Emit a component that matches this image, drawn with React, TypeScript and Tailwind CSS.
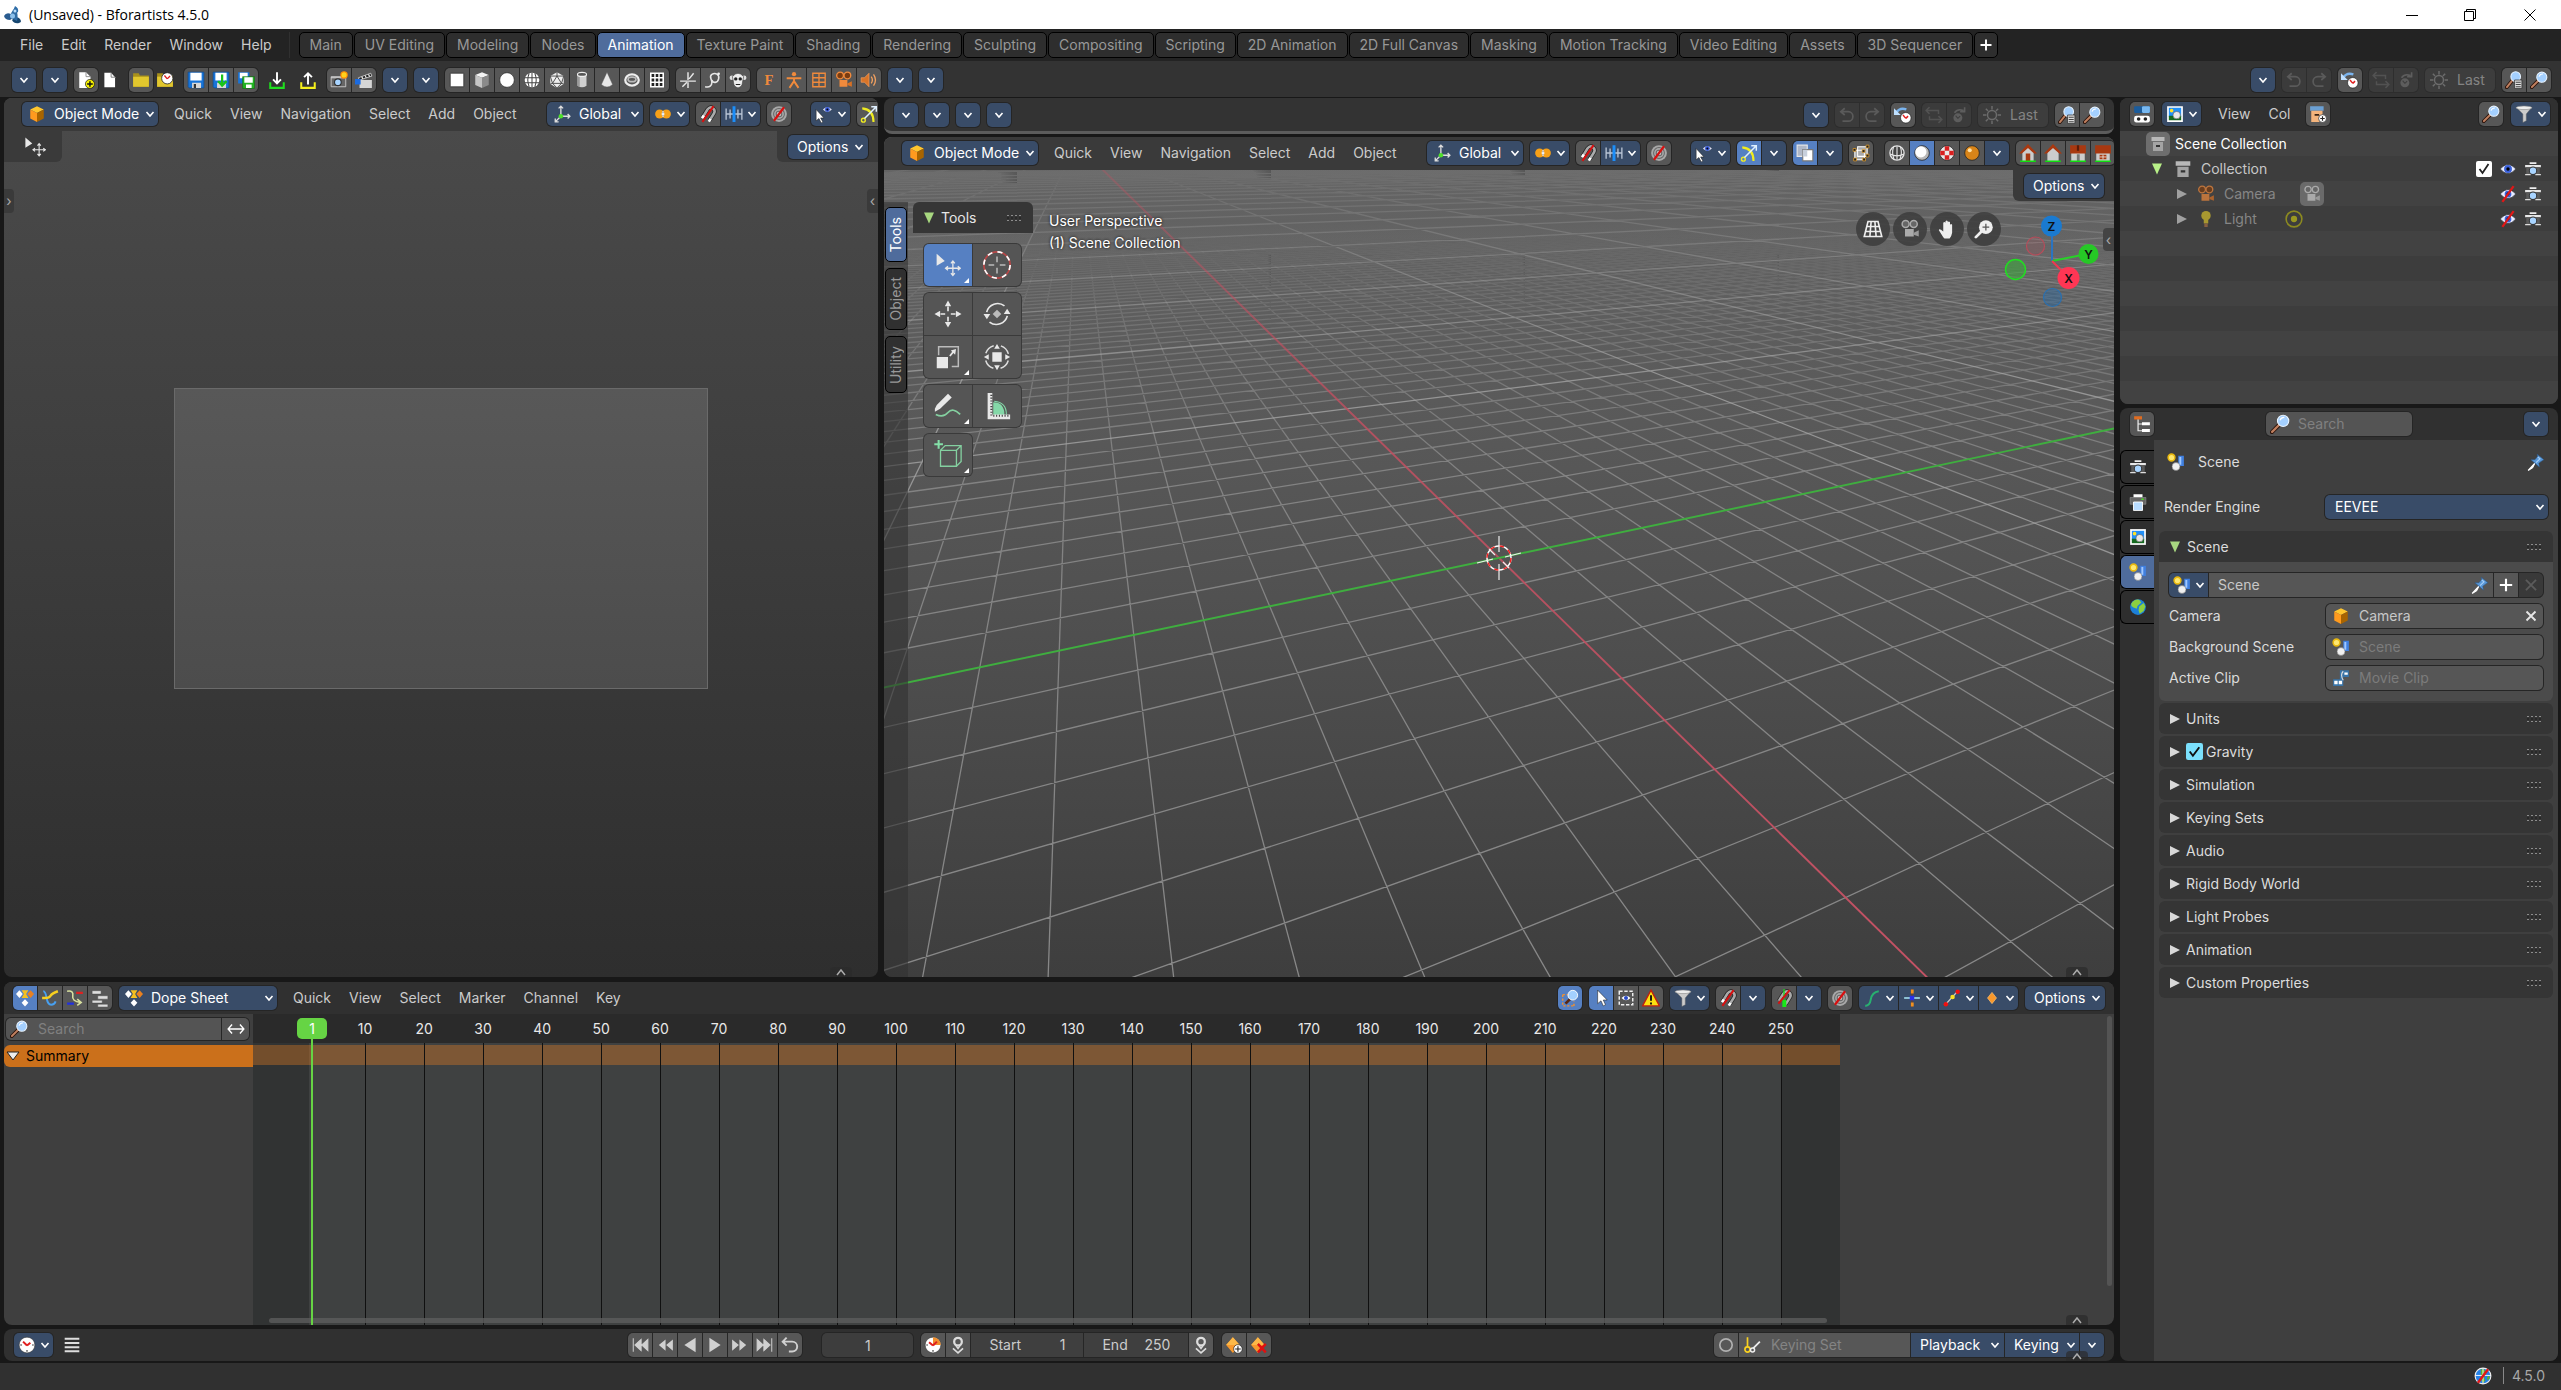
import React from 'react';

const ICONS: Record<string, React.ReactNode> = {
  fileNew: (
    <>
      <path d="M2 1h6l4 4v10H2z" fill="#fff" />
      <path d="M8 1v4h4" fill="none" stroke="#888" strokeWidth=".8" />
      <circle cx="11.5" cy="11.5" r="4" fill="#f6f000" stroke="#111" strokeWidth=".6" />
      <path d="M11.5 9v5M9 11.5h5" stroke="#111" strokeWidth="1.3" />
    </>
  ),
  file: (
    <>
      <path d="M3 1.5h6l3.5 4v9H3z" fill="#fff" />
      <path d="M9 1.5v4h3.5" fill="none" stroke="#777" strokeWidth=".8" />
    </>
  ),
  folder: (
    <>
      <path d="M1 2h5l1 2h8v10H1z" fill="#a8901c" />
      <path d="M1 5h14v9H1z" fill="#e2c72e" />
    </>
  ),
  folderClock: (
    <>
      <path d="M1 2h5l1 2h8v10H1z" fill="#a8901c" />
      <path d="M1 5h14v9H1z" fill="#e2c72e" />
      <circle cx="10" cy="6.5" r="5" fill="#fff" stroke="#222" strokeWidth=".7" />
      <path d="M10 7 7.5 4M10 7l2.5-2.5" stroke="#e02020" strokeWidth="1.2" />
    </>
  ),
  save: (
    <>
      <path d="M1 1h14v14H2l-1-1z" fill="#1874d8" stroke="#0b4a94" strokeWidth=".6" />
      <path d="M3 1.5h10v7H3z" fill="#fff" />
      <path d="M4.5 10.5h8V15h-8z" fill="#d8d8d8" />
      <path d="M6 11.5h2V15H6z" fill="#333" />
    </>
  ),
  saveDown: (
    <>
      <path d="M1 1h14v14H2l-1-1z" fill="#1874d8" stroke="#0b4a94" strokeWidth=".6" />
      <path d="M3 1.5h10v7H3z" fill="#fff" />
      <path d="M4.5 10.5h8V15h-8z" fill="#d8d8d8" />
      <path d="M9 3v10M5.5 9 9 13l4-4" fill="none" stroke="#18c418" strokeWidth="2" />
    </>
  ),
  saveCopy: (
    <>
      <path d="M1 1h10v10H1z" fill="#1874d8" />
      <path d="M2.5 1.5h7v5h-7z" fill="#fff" />
      <path d="M5 5h10.500v10.500H5z" fill="#22b422" stroke="#0d6a0d" strokeWidth=".5" />
      <path d="M6.500 5.500h7.500v5H6.500zM8 12h5v3H8z" fill="#fff" />
    </>
  ),
  importIn: (
    <>
      <path d="M2 10v5h12v-5" fill="none" stroke="#1fe01f" strokeWidth="1.800" />
      <path d="M8 1v10M4.500 7.500 8 11l3.500-3.500" fill="none" stroke="#fff" strokeWidth="1.700" />
    </>
  ),
  exportOut: (
    <>
      <path d="M2 10v5h12v-5" fill="none" stroke="#f4f01c" strokeWidth="1.800" />
      <path d="M8 12V2M4.500 5.500 8 2l3.500 3.500" fill="none" stroke="#fff" strokeWidth="1.700" />
    </>
  ),
  photo: (
    <>
      <path d="M1 5h13v9H1z" fill="#666" stroke="#ccc" strokeWidth=".8" />
      <path d="M1 6h12" stroke="#ddd" />
      <circle cx="7" cy="10" r="3" fill="#a8d4ff" stroke="#333" />
      <circle cx="12.500" cy="3.500" r="2.800" fill="#ffd21c" stroke="#f80" />
    </>
  ),
  clapper: (
    <>
      <path d="M4 8h11v7H4z" fill="#d6d6d6" />
      <path d="m3 6 11-4 1 2.500L4 8z" fill="#222" stroke="#ddd" strokeWidth=".7" />
      <path d="m6 5 1 2M9 4l1 2M12 3l1 2" stroke="#eee" />
      <path d="M0 7h5v5H0z" fill="#1b6be0" />
    </>
  ),
  plane: <path d="M2 2h12v12H2z" fill="#fff" stroke="#222" strokeWidth=".6" />,
  cube: (
    <>
      <path d="m8 1 6 2.500L8 6 2 3.500z" fill="#f4f4f4" />
      <path d="M2 3.500 8 6v9l-6-2.500z" fill="#c4c4c4" />
      <path d="M14 3.500 8 6v9l6-2.500z" fill="#8a8a8a" />
    </>
  ),
  circle: <circle cx="8" cy="8" r="6.500" fill="#fff" stroke="#222" strokeWidth=".6" />,
  uvsphere: (
    <>
      <circle cx="8" cy="8" r="6.500" fill="#fff" />
      <path d="M1.500 6h13M1.500 10.500h13M8 1.500v13M5.500 2Q3 8 5.500 14M10.500 2q2.500 6 0 12" fill="none" stroke="#444" strokeWidth=".9" />
    </>
  ),
  ico: (
    <>
      <path d="m8 1 6 3.500v7L8 15l-6-3.500v-7z" fill="#eee" />
      <path d="m8 4.500 4 6.500H4zM8 1v3.500M2 4.500 8 4.500l6 0M2 11.500l2-.5M14 11.500l-2-.5M8 15l-4-4M8 15l4-4M2 4.500 4 11M14 4.500 12 11" fill="none" stroke="#444" strokeWidth=".8" />
    </>
  ),
  cylinder: (
    <>
      <path d="M4 3v10q4 3 8 0V3z" fill="#d0d0d0" />
      <path d="M4 3v10l2 1.300V4z" fill="#9a9a9a" />
      <ellipse cx="8" cy="3" rx="4" ry="1.800" fill="#555" stroke="#eee" />
    </>
  ),
  cone: <path d="m8 1 5 11q-5 4.500-10 0z" fill="#e6e6e6" stroke="#555" strokeWidth=".4" />,
  torus: (
    <>
      <ellipse cx="8" cy="8" rx="6" ry="5" fill="none" stroke="#eee" strokeWidth="2" />
      <ellipse cx="8" cy="7.500" rx="3.500" ry="2" fill="none" stroke="#bbb" strokeWidth="1.500" />
    </>
  ),
  grid: (
    <>
      <path d="M2.500 2h11v12h-11z" fill="#222" stroke="#fff" strokeWidth="1.400" />
      <path d="M6.200 2v12M9.800 2v12M2.500 6h11M2.500 10h11" stroke="#fff" strokeWidth="1.300" />
    </>
  ),
  empty: <path d="M1 9h14M8 1v7M8 10v5M3 14l4-4M9 7l4-5" stroke="#e6e6e6" strokeWidth="1.300" />,
  curve: (
    <>
      <path d="M1 14c4 1 6-1 6-4S4 5 7 3s7 0 6 4-5 4-6 1" fill="none" stroke="#e6e6e6" strokeWidth="1.400" />
      <circle cx="13" cy="2.500" r="1.200" fill="#eee" />
    </>
  ),
  monkey: (
    <>
      <circle cx="2.500" cy="6" r="2" fill="#ddd" />
      <circle cx="13.500" cy="6" r="2" fill="#ddd" />
      <path d="M3 5q5-6 10 0l-1 5q0 4-4 5-4-1-4-5z" fill="#eee" stroke="#444" strokeWidth=".6" />
      <circle cx="6" cy="7" r="1.500" fill="#222" />
      <circle cx="10" cy="7" r="1.500" fill="#222" />
      <path d="M6 12h4" stroke="#222" />
    </>
  ),
  fontObj: (
    <text x="8" y="12.500" textAnchor="middle" fontFamily="Liberation Serif, serif" fontWeight="700" fontSize="13" fill="#f08a3c">
      F
    </text>
  ),
  armature: (
    <>
      <circle cx="8" cy="2.800" r="1.900" fill="#f08a3c" />
      <path d="M1.500 6.500h13M8 6v4M8 9 4 15M8 9l4 6" stroke="#f08a3c" strokeWidth="1.700" fill="none" />
    </>
  ),
  lattice: <path d="M2.500 2h11v12h-11zM8 2v12M2.500 6h11M2.500 10h11" fill="none" stroke="#f08a3c" strokeWidth="1.200" />,
  movieCam: (
    <>
      <circle cx="4.500" cy="4" r="3" fill="#7a3c10" stroke="#f08a3c" strokeWidth="1.200" />
      <circle cx="11" cy="4" r="3" fill="#7a3c10" stroke="#f08a3c" strokeWidth="1.200" />
      <path d="M4 8h7v6H4z" fill="#f08a3c" />
      <path d="m11 11 4-2v5l-4-1.500z" fill="#d87024" />
    </>
  ),
  movieCamGray: (
    <>
      <circle cx="4.500" cy="4" r="2.800" fill="#666" stroke="#aaa" strokeWidth="1.200" />
      <circle cx="11" cy="4" r="2.800" fill="#666" stroke="#aaa" strokeWidth="1.200" />
      <path d="M4 8h7v6H4z" fill="#aaa" />
      <path d="m11 11 4-2v5l-4-1.500z" fill="#999" />
    </>
  ),
  speaker: (
    <>
      <path d="M1 6h3l4-4v12l-4-4H1z" fill="#d87428" stroke="#f4a060" strokeWidth=".6" />
      <path d="M10 5q2 3 0 6M12 3q3.500 5 0 10" fill="none" stroke="#f0a060" strokeWidth="1.200" />
    </>
  ),
  undo: <path d="M6 2 2.500 5 6 8M3 5h6a4 4 0 0 1 0 8.500H4" fill="none" stroke="#666" strokeWidth="1.500" />,
  redo: <path d="M10 2 13.500 5 10 8M13 5H7a4 4 0 0 0 0 8.500h5" fill="none" stroke="#666" strokeWidth="1.500" />,
  history: (
    <>
      <path d="M2 6q3-5 9-3" fill="none" stroke="#7ab4ee" strokeWidth="2" />
      <path d="M0 2v6h6z" fill="#bfe0ff" />
      <circle cx="10.500" cy="10.500" r="4.700" fill="#fff" stroke="#222" strokeWidth=".6" />
      <path d="M10.500 11 8 8M10.500 11l2-2" stroke="#e02020" strokeWidth="1.300" />
    </>
  ),
  repeat: <path d="M4 1 1 4l3 3M1.500 4H12v3M12 15l3-3-3-3M14.500 12H4V9" fill="none" stroke="#5c5c5c" strokeWidth="1.300" />,
  repeatHist: (
    <>
      <path d="M4 6q3-4 8-2M13 1v4H9" fill="none" stroke="#6a6a6a" strokeWidth="1.400" />
      <circle cx="7" cy="10.500" r="4" fill="#6a6a6a" />
      <path d="M7 11 5 8.500M7 11l2-2" stroke="#444" />
    </>
  ),
  gear: (
    <>
      <circle cx="8" cy="8" r="4" fill="none" stroke="#6c6c6c" strokeWidth="1.300" />
      <path d="M8 0v3M8 13v3M0 8h3M13 8h3M2.500 2.500l2 2M11.500 11.500l2 2M13.500 2.500l-2 2M4.500 11.500l-2 2" stroke="#6c6c6c" strokeWidth="1.300" />
    </>
  ),
  search: (
    <>
      <path d="m7 9-5.500 5.500" stroke="#2a120a" strokeWidth="3.200" strokeLinecap="round" />
      <path d="m7 9-5.300 5.300" stroke="#c08060" strokeWidth="1.800" strokeLinecap="round" />
      <circle cx="10.500" cy="5.500" r="4.500" fill="#a4d0ff" stroke="#e8f4ff" strokeWidth=".9" />
      <path d="M8 5q1-2.500 3.500-2.300" fill="none" stroke="#fff" />
    </>
  ),
  searchList: (
    <>
      <path d="m6 9-4.500 5.500" stroke="#2a120a" strokeWidth="3.200" strokeLinecap="round" />
      <path d="m6 9-4.300 5.300" stroke="#c08060" strokeWidth="1.800" strokeLinecap="round" />
      <circle cx="9.500" cy="5" r="4.300" fill="#a4d0ff" stroke="#e8f4ff" strokeWidth=".9" />
      <path d="M8.500 8H15v7.500H8.500z" fill="#ddd" stroke="#222" strokeWidth=".6" />
      <path d="M9.500 10h4.500M9.500 12h4.500M9.500 14h4.500" stroke="#333" strokeWidth=".8" />
    </>
  ),
  cubeOrange: (
    <>
      <path d="m8 1 6 3-6 3-6-3z" fill="#ffc62e" />
      <path d="M2 4l6 3v8l-6-3z" fill="#ff9a1e" />
      <path d="m14 4-6 3v8l6-3z" fill="#a86400" />
    </>
  ),
  orient: (
    <>
      <path d="M7 10V1M5 3l2-2 2 2M7 10h8M13 8l2 2-2 2M7 10l-5 5M2 12v3h3" fill="none" stroke="#ddd" strokeWidth="1.200" />
      <circle cx="7" cy="10" r="2" fill="#4ee02a" />
    </>
  ),
  pivot: (
    <>
      <circle cx="5" cy="8" r="4" fill="#f6a018" />
      <circle cx="11" cy="8" r="4" fill="#f6a018" />
      <path d="M8 5.300q2 2.700 0 5.400-2-2.700 0-5.400z" fill="#20304a" stroke="#fff" strokeWidth=".6" />
      <circle cx="8" cy="8" r="1" fill="#fff" />
    </>
  ),
  magnetOff: (
    <>
      <path d="M3.500 10.500 7.500 4q2.500-3 5-1t.5 5L9.500 13.500" fill="none" stroke="#222" strokeWidth="3.600" />
      <path d="M3.500 10.500 7.500 4q2.500-3 5-1t.5 5L9.500 13.500" fill="none" stroke="#aaa" strokeWidth="2.300" />
      <path d="m2.700 11.800 1.600-2.500M8.700 14.800l1.600-2.500" stroke="#fff" strokeWidth="2.300" />
      <path d="M3 15 13 1" stroke="#d81010" strokeWidth="1.800" />
    </>
  ),
  snapInc: (
    <>
      <path d="M1 3v10M4.500 4v8M11.500 4v8M15 3v10M1 8h14" stroke="#b8c4d4" strokeWidth="1.200" />
      <path d="M8 1v14" stroke="#1c8ef8" strokeWidth="2.600" />
    </>
  ),
  propOff: (
    <>
      <circle cx="8" cy="8" r="7" fill="#a8a8a8" />
      <circle cx="8" cy="8" r="4.800" fill="none" stroke="#666" strokeWidth=".9" />
      <circle cx="8" cy="8" r="2.500" fill="#c8c8c8" stroke="#666" strokeWidth=".9" />
      <path d="M3.500 14 12.500 2" stroke="#d81010" strokeWidth="1.900" />
    </>
  ),
  cursorEye: (
    <>
      <path d="m1 4 0 10 2.500-2 2 4 1.500-1-2-3.500H8z" fill="#fff" stroke="#222" strokeWidth=".5" />
      <path d="M7 4q4-4 8 0-4 4-8 0z" fill="#dde" />
      <circle cx="11" cy="4" r="2.200" fill="#3a5cd8" />
      <circle cx="11" cy="4" r=".9" fill="#001" />
    </>
  ),
  gizmo: (
    <>
      <path d="M2 3q10 1 10 12" fill="none" stroke="#f0ec20" strokeWidth="1.900" />
      <circle cx="3" cy="13.500" r="1.700" fill="none" stroke="#f0ec20" strokeWidth="1.200" />
      <path d="M4 12 14 2M10 1.500h4.500V6" fill="none" stroke="#dff0ff" strokeWidth="1.300" />
    </>
  ),
  xray: (
    <>
      <path d="M1 1h9v10H1z" fill="#b0b8c8" stroke="#e8e8e8" />
      <path d="M6 5h9v10H6z" fill="#fff" stroke="#777" />
      <path d="M6 5h4v6H6z" fill="#c8d0dc" />
    </>
  ),
  retopo: (
    <>
      <path d="M5 2.500h8.500V11H5zM2.500 5.500H11V14H2.500z" fill="#aaa" stroke="#fff" strokeWidth=".9" />
      <path d="M1 4h2.500v2.500H1zM1.500 12.500H4V15H1.500zM9.500 12.500H12V15H9.500zM12.500 1H15v2.500h-2.500zM12.500 9H15v2.500h-2.500zM9 5h2.500v2.500H9z" fill="#222" stroke="#f6a828" strokeWidth=".6" />
    </>
  ),
  wire: (
    <>
      <circle cx="8" cy="8" r="6.300" fill="#444" stroke="#e4e4e4" strokeWidth="1.200" />
      <path d="M8 2v12M2 9q6 3 12 0M5 2.500Q3 8 5.500 14M11 2.500q2 5.500-.5 11.500" fill="none" stroke="#e4e4e4" />
    </>
  ),
  solid: (
    <>
      <circle cx="8" cy="8" r="6.500" fill="#b8b8b8" stroke="#222" strokeWidth=".7" />
      <circle cx="7" cy="7" r="5" fill="#fff" />
    </>
  ),
  material: (
    <>
      <circle cx="8" cy="8" r="6.500" fill="#e8e8e8" stroke="#222" strokeWidth=".7" />
      <path d="M6 2h4v4H6zM2 6h4v4H2zM10 6h4v4h-4zM6 10h4v4H6z" fill="#d82020" />
    </>
  ),
  rendered: (
    <>
      <circle cx="8" cy="8" r="6.500" fill="#d88418" stroke="#222" strokeWidth=".7" />
      <circle cx="6" cy="5.500" r="1.800" fill="#ffe2a8" />
    </>
  ),
  home1: (
    <>
      <path d="M3 7 8 3l5 4v8H3z" fill="#ccc" />
      <path d="M8 0 0 8.500h2.500L8 3.500l5.500 5H16z" fill="#a83810" />
      <path d="M6 8.500h4V15H6z" fill="#a83810" />
      <path d="M1 15.300h14" stroke="#10e010" strokeWidth="1.300" />
    </>
  ),
  home2: (
    <>
      <path d="M3 7 8 3l5 4v8H3z" fill="#ccc" />
      <path d="M8 0 0 8.500h2.500L8 3.500l5.500 5H16z" fill="#a83810" />
      <path d="M1 15.300h14" stroke="#10e010" strokeWidth="1.300" />
    </>
  ),
  home3: (
    <>
      <path d="M2 8h12v7H2z" fill="#ccc" />
      <path d="M1 1h14v7.500H1z" fill="#a83810" />
      <path d="M7 1h2v5H7z" fill="#5a1c08" />
      <path d="M7 9h2.500v6H7z" fill="#777" />
      <path d="M1 15.300h14" stroke="#10e010" strokeWidth="1.300" />
    </>
  ),
  home4: (
    <>
      <path d="M2 8h12v7H2z" fill="#ccc" />
      <path d="M1 1h14v7.500H1z" fill="#a83810" />
      <path d="M5 9.500h6v4H5z" fill="#a83810" />
      <path d="M8 9.500v4M5 11.500h6" stroke="#eee" strokeWidth=".7" />
      <path d="M1 15.300h14" stroke="#10e010" strokeWidth="1.300" />
    </>
  ),
  toggles: (
    <>
      <rect x="1" y="1" width="14" height="6" rx="1" fill="#1b5c9c" />
      <rect x="8" y="1" width="7" height="6" rx="1" fill="#78b8f0" />
      <rect x="1" y="9.500" width="14" height="6" rx="2" fill="#fff" />
      <circle cx="5" cy="12.500" r="1.600" fill="#222" />
      <circle cx="11" cy="12.500" r="1.600" fill="#222" />
    </>
  ),
  image: (
    <>
      <path d="M1 1h14v14H1z" fill="#fff" />
      <path d="M2.500 2.500h11v8h-11z" fill="#2290f8" />
      <path d="M2.500 9.500h11v4h-11z" fill="#166a20" />
      <circle cx="5" cy="5" r="1.600" fill="#ffe028" />
      <circle cx="9.500" cy="9" r="3.300" fill="#e8e8e8" stroke="#555" strokeWidth=".5" />
    </>
  ),
  boxAdd: (
    <>
      <path d="M1 1h12v4H1z" fill="#6ba0d4" />
      <path d="M2 5h10v10H2z" fill="#f4b47c" />
      <path d="M5 8h4v1.500H5z" fill="#3a2414" />
      <circle cx="12" cy="12" r="3.500" fill="#fff" stroke="#222" strokeWidth=".6" />
      <path d="M12 10v4M10 12h4" stroke="#222" />
    </>
  ),
  box: (
    <>
      <path d="M1.500 1h13v4h-13z" fill="#b8b8b8" />
      <path d="M3 6h10v9H3z" fill="#a4a4a4" />
      <path d="M6 9h4v2H6z" fill="#333" />
    </>
  ),
  funnel: (
    <>
      <path d="M1 2q7 3 14 0l-5 6v6l-3 1.500V8z" fill="#ccc" stroke="#666" strokeWidth=".4" />
      <ellipse cx="8" cy="2.500" rx="7" ry="1.600" fill="#eee" stroke="#888" strokeWidth=".5" />
    </>
  ),
  eye: (
    <>
      <path d="M1 8q7-8 14 0-7 8-14 0z" fill="#e8ecff" stroke="#222" strokeWidth=".6" />
      <circle cx="8" cy="8" r="3.500" fill="#3a60d8" />
      <circle cx="8" cy="8" r="1.500" fill="#000" />
    </>
  ),
  eyeOff: (
    <>
      <path d="M1 8q7-8 14 0-7 8-14 0z" fill="#e8ecff" stroke="#222" strokeWidth=".6" />
      <circle cx="8" cy="8" r="3" fill="#3a60d8" />
      <circle cx="8" cy="8" r="1.300" fill="#000" />
      <path d="M3 15 13 1" stroke="#e01818" strokeWidth="2" />
    </>
  ),
  render: (
    <>
      <path d="M5 2h6v1.500H5z" fill="#eee" />
      <path d="M1 4.500h14v2H1z" fill="#e8e8e8" />
      <path d="M2 6.500h12v6H2z" fill="#5a5a5a" />
      <path d="M1 13h5M10 13h5" stroke="#ddd" strokeWidth="1.200" />
      <circle cx="8" cy="9.500" r="3.300" fill="#a8d4ff" stroke="#333" strokeWidth=".9" />
    </>
  ),
  bulb: (
    <>
      <circle cx="8" cy="5" r="4.200" fill="#a89830" />
      <path d="M6 8h4v4H6z" fill="#a89830" />
      <path d="M6.500 12h3v3h-3z" fill="#886040" />
    </>
  ),
  lightData: (
    <>
      <circle cx="8" cy="8" r="7" fill="none" stroke="#8c8a20" strokeWidth="1.400" />
      <circle cx="8" cy="8" r="2.800" fill="#9a9820" />
    </>
  ),
  tree: (
    <>
      <path d="M1 1h7v3H1z" fill="#e06c20" />
      <path d="M4.500 4v10H8M4.500 8H8" fill="none" stroke="#eee" strokeWidth="1.100" />
      <path d="M8 6.500h7V9H8zM8 12.500h7V15H8z" fill="#fff" />
    </>
  ),
  scene: (
    <>
      <circle cx="4" cy="4" r="3" fill="#ffe870" stroke="#e8b810" strokeWidth="1.400" />
      <path d="M10 2.500h5v9h-5z" fill="#4080e0" />
      <path d="M11 3.500h1.700v7H11z" fill="#a0c8ff" />
      <circle cx="8" cy="12" r="3.500" fill="#f0f0f0" stroke="#777" strokeWidth=".5" />
    </>
  ),
  pin: (
    <>
      <path d="M7 9 1 15.500 5 13z" fill="#fff" stroke="#fff" />
      <path d="m9 1 6 5-1.500.8L10.500 9l.5 3.500L3.500 6 7 6l2.500-3z" fill="#5a98d8" stroke="#2a5888" strokeWidth=".5" />
      <path d="m9.500 3.500 2 1.700L8 8.500" fill="none" stroke="#a8d0f8" />
    </>
  ),
  printer: (
    <>
      <path d="M4 1h8v3H4z" fill="#fff" />
      <path d="M1 4h14v6H1z" fill="#666" stroke="#999" strokeWidth=".5" />
      <path d="M11 5.500h2" stroke="#48e020" strokeWidth="1.400" />
      <path d="M4 8h8v7.500H4z" fill="#b8dcff" stroke="#fff" strokeWidth=".8" />
    </>
  ),
  world: (
    <>
      <circle cx="8" cy="8" r="7" fill="#1c80d8" />
      <path d="M2 5q3-4.500 7-3.500l2 2.500-3.500 3-.5 2.500-3-1L2.200 7zM9 7.500l4-3 1.500 3-1.500 4-3.500 2.500-1-3z" fill="#8cd040" />
    </>
  ),
  clip: (
    <>
      <path d="M7 1h8v6h-5v4H7z" fill="#3874a8" />
      <path d="M1 9h9v6H1z" fill="#3874a8" />
      <path d="M2 10.500h3v3H2zM6 10.500h3v3H6zM11 3h3v2h-3z" fill="#fff" />
      <path d="M10 10q-3-5 0-8" stroke="#ddd" fill="none" />
    </>
  ),
  dope: (
    <>
      <path d="m3 1 3 3.500L3 8 0 4.500z" fill="#fff" />
      <path d="M5 1h6L9 4.500 11 8H5l2-3.500z" fill="#f6c020" />
      <path d="m13 1 3 3.500L13 8l-3-3.500z" fill="#e88020" />
      <path d="m8 9 3 3.300L8 15.600 5 12.300z" fill="#fff" />
    </>
  ),
  graph: (
    <>
      <path d="M2 2q2 0 3 6t4 6 4-3" fill="none" stroke="#48a0f0" strokeWidth="1.700" />
      <path d="M1 8h2.500q4 0 5-2T15 2" fill="none" stroke="#f8d020" strokeWidth="2.200" />
    </>
  ),
  driver: (
    <>
      <path d="M1 2q6-1 5 4t7 6M10 9l3.500 3L10 14.500" fill="none" stroke="#d8e0a0" strokeWidth="1.400" />
      <path d="M9 3.500h6" stroke="#e02020" strokeWidth="2" />
      <path d="M1 13h6" stroke="#2030e0" strokeWidth="2" />
    </>
  ),
  nla: (
    <>
      <path d="M1 1.500h8v3H1zM6 6h9v3H6zM1 10h9v2.500H1zM6 13.500h9V16H6z" fill="#ddd" stroke="#444" strokeWidth=".4" />
    </>
  ),
  swap: <path d="M1 8h14M4.500 4 1 8l3.500 4M11.500 4 15 8l-3.500 4" fill="none" stroke="#fff" strokeWidth="1.200" />,
  cursorBox: (
    <>
      <path d="M1.500 5v10h10" fill="none" stroke="#f09030" strokeDasharray="2 1.500" strokeWidth="1.300" />
      <path d="M1.500 5h5M11.500 15v-4" stroke="#f09030" strokeDasharray="2 1.500" strokeWidth="1.300" />
      <path d="M8 9 4 13" stroke="#5a2810" strokeWidth="2.500" />
      <circle cx="10.500" cy="5.500" r="4.300" fill="#a4d0ff" stroke="#fff" strokeWidth=".8" />
    </>
  ),
  arrow: <path d="M5 1v12l3-2.500L10 15l2-1-2-4.200h3.500z" fill="#fff" stroke="#222" strokeWidth=".5" />,
  hidden: (
    <>
      <path d="M2 2h12v12H2z" fill="none" stroke="#eee" strokeWidth="1.300" strokeDasharray="3 1.500" />
      <path d="M4 8q4-4 8 0-4 4-8 0z" fill="#fff" />
      <circle cx="8" cy="8" r="1.800" fill="#2848c8" />
    </>
  ),
  warning: (
    <>
      <path d="M8 1 15.500 15H.5z" fill="#fce010" stroke="#c02010" strokeWidth="1.200" />
      <path d="M8 5.500v5M8 12v1.800" stroke="#111" strokeWidth="1.700" />
    </>
  ),
  magnetGreen: (
    <>
      <path d="M3.500 10.500 7.500 4q2.500-3 5-1t.5 5L9.500 13.500" fill="none" stroke="#222" strokeWidth="3.600" />
      <path d="M3.500 10.500 7.500 4q2.500-3 5-1t.5 5L9.500 13.500" fill="none" stroke="#aaa" strokeWidth="2.300" />
      <path d="M8 0v9" stroke="#18d818" strokeWidth="1.200" />
      <path d="M6.500 9.500h3.500V16H6.500z" fill="#18e818" />
      <path d="M3 13 13 1" stroke="#d81010" strokeWidth="1.800" />
    </>
  ),
  interp: <path d="M2 15q4 0 5-6t7-7" fill="none" stroke="#28b070" strokeWidth="1.800" />,
  keyAxes: (
    <>
      <path d="M8 0v16" stroke="#7a3c20" />
      <path d="M1 8h14" stroke="#a8e8f8" strokeWidth="1.500" />
      <path d="M6 6h4v4H6z" fill="#2830e8" />
      <path d="M7 .5h2.500V4H7zM7 12h2.500v3.500H7z" fill="#f09020" />
    </>
  ),
  handles: (
    <>
      <path d="M2 14 13 2" stroke="#ccc" />
      <circle cx="2.500" cy="13.500" r="2" fill="#f01010" />
      <circle cx="13" cy="2.500" r="2" fill="#f01010" />
      <circle cx="8.500" cy="7" r="2" fill="#f8e020" />
    </>
  ),
  keyframe: <path d="m8 3 4 5-4 5-4-5z" fill="#f8982c" stroke="#ffc070" strokeWidth=".6" />,
  clock: (
    <>
      <circle cx="8" cy="8" r="7" fill="#fff" stroke="#333" strokeWidth=".5" />
      <path d="M8 8.500 4.500 5M8 8.500 11 6" stroke="#e02020" strokeWidth="1.800" />
      <path d="M8 12.500v1.500M2 8h1.500M12.500 8H14" stroke="#333" />
    </>
  ),
  clockRange: (
    <>
      <circle cx="8" cy="8" r="7" fill="#fff" stroke="#333" strokeWidth=".5" />
      <path d="M8 8V1a7 7 0 0 1 7 7z" fill="#f09030" />
      <path d="M8 8.500 4.500 5.500M8 8.500 11.500 5" stroke="#e02020" strokeWidth="1.800" />
      <path d="M8 12.500v1.500M2 8h1.500" stroke="#333" />
    </>
  ),
  menu: <path d="M1.500 2.500h13M1.500 6.200h13M1.500 9.900h13M1.500 13.600h13" stroke="#ddd" strokeWidth="1.800" />,
  first: <path d="M2 2v12M9 3v10L3.500 8zM15 3v10L9.500 8z" fill="#d0d0d0" stroke="#d0d0d0" strokeWidth=".9" />,
  prev: <path d="M8.500 3v10L2.500 8zM15 3v10L9 8z" fill="#d0d0d0" />,
  playBack: <path d="M13 1.500v13L3 8z" fill="#d0d0d0" />,
  play: <path d="M3 1.500v13L13 8z" fill="#d0d0d0" />,
  next: <path d="M7.500 3v10l6-5zM1 3v10l6-5z" fill="#d0d0d0" />,
  last: <path d="M14 2v12M7 3v10l5.500-5zM1 3v10l5.500-5z" fill="#d0d0d0" stroke="#d0d0d0" strokeWidth=".9" />,
  loop: <path d="M5 1.500 1.500 5 5 8.500M2 5h8a4.300 4.300 0 0 1 0 8.800H7" fill="none" stroke="#d0d0d0" strokeWidth="1.700" />,
  marker: (
    <>
      <circle cx="8" cy="5" r="3.400" fill="none" stroke="#ddd" strokeWidth="2" />
      <path d="M5.500 7.500 8 11l2.500-3.500M3.500 11 8 15l4.500-4" fill="none" stroke="#ddd" strokeWidth="1.400" />
    </>
  ),
  keyAdd: (
    <>
      <path d="m7 1 6 7-6 7-6-7z" fill="#f8982c" />
      <path d="m7 1 6 7H1z" fill="#fcb848" />
      <circle cx="11.500" cy="11.500" r="3.800" fill="#fff" stroke="#222" strokeWidth=".6" />
      <path d="M11.500 9v5M9 11.500h5" stroke="#222" />
    </>
  ),
  keyDel: (
    <>
      <path d="m7 1 6 7-6 7-6-7z" fill="#f8982c" />
      <path d="m7 1 6 7H1z" fill="#fcb848" />
      <path d="m7 7 7 7.500M14 7l-7 7.500" stroke="#e01010" strokeWidth="2.200" />
    </>
  ),
  record: <circle cx="8" cy="8" r="5.500" fill="none" stroke="#b0b0b0" strokeWidth="1.500" />,
  keys: (
    <>
      <path d="M4 1v9" stroke="#f8d020" strokeWidth="1.500" />
      <circle cx="4" cy="12" r="2.300" fill="none" stroke="#f8d020" strokeWidth="1.500" />
      <path d="m15 5-6 6" stroke="#eee" strokeWidth="1.500" />
      <circle cx="8.500" cy="12.500" r="1.800" fill="none" stroke="#eee" strokeWidth="1.300" />
    </>
  ),
  offline: (
    <>
      <circle cx="8" cy="8" r="7" fill="#2480e8" stroke="#eee" strokeWidth="1" />
      <path d="M6 2h3l2 4-2 3 1 3-2 2.500-2-4zM11.500 9l2-1.500.5 2.500-2 2z" fill="#5cb030" />
      <path d="M1 7.500h14M8 1v14" stroke="#fff" strokeWidth=".8" />
      <path d="M3.500 14 12.500 2" stroke="#e01818" strokeWidth="2.200" />
    </>
  ),
  plus: <path d="M8 2.500v11M2.500 8h11" stroke="#fff" strokeWidth="1.900" />,
  close: <path d="m3.500 3.500 9 9M12.500 3.500l-9 9" stroke="#e6e6e6" strokeWidth="1.900" />,
  closeDim: <path d="m3.500 3.500 9 9M12.500 3.500l-9 9" stroke="#6a6a6a" strokeWidth="1.600" />,
  selectMove: (
    <>
      <path d="M1 1v7.500L6 5.500z" fill="#e8e8e8" />
      <path d="M11 5.500v9M6.500 10h9M9.800 7 11 5.500 12.200 7M9.800 13 11 14.500l1.200-1.500M8 8.800 6.500 10 8 11.200M14 8.800l1.500 1.200-1.500 1.200" fill="none" stroke="#e8e8e8" strokeWidth=".8" />
    </>
  ),
  cursor3d: (
    <>
      <circle cx="8" cy="8" r="7" fill="none" stroke="#b84848" strokeWidth=".9" />
      <circle cx="8" cy="8" r="7" fill="none" stroke="#fff" strokeWidth=".9" strokeDasharray="2.750 2.750" />
      <path d="M8 3.500v3M8 9.500v3M3.500 8h3M9.500 8h3" stroke="#bbb" strokeWidth=".8" />
    </>
  ),
  move: (
    <>
      <path d="M8 4v8M4 8h8" stroke="#e8e8e8" strokeDasharray="2.500 3" strokeWidth=".9" />
      <path d="m8 .8 1.700 3H6.300zM8 15.200l1.700-3H6.300zM.8 8l3-1.700v3.400zM15.200 8l-3-1.700v3.400z" fill="#e8e8e8" />
    </>
  ),
  rotate: (
    <>
      <path d="M2.500 7A6 6 0 0 1 12 3.700M13.500 9A6 6 0 0 1 4 12.300" fill="none" stroke="#e8e8e8" strokeWidth=".9" />
      <path d="m8 5.700 2.300 2.300L8 10.300 5.700 8z" fill="#bbb" />
      <path d="M.8 8h3.600L2.600 10.800zM15.200 8h-3.600l1.800-2.800z" fill="#e8e8e8" />
    </>
  ),
  scale: (
    <>
      <path d="M3 7V2.500h10.500V13H10" fill="none" stroke="#bbb" strokeWidth=".8" />
      <path d="M2 8h6v6H2z" fill="#e8e8e8" />
      <path d="M9 7.500 11 5" stroke="#e8e8e8" strokeWidth=".9" />
      <path d="M9.500 4.500 12.300 3.700 11.800 6.800z" fill="#e8e8e8" />
    </>
  ),
  transform: (
    <>
      <circle cx="8" cy="8" r="6.300" fill="none" stroke="#ddd" strokeWidth=".8" strokeDasharray="6 3.900" strokeDashoffset="8" />
      <path d="M5.500 5.500h5v5h-5z" fill="#e8e8e8" />
      <path d="m8 1 1.500 2.600h-3zM8 15l1.500-2.600h-3zM1 8l2.600-1.500v3zM15 8l-2.600-1.500v3z" fill="#e8e8e8" />
    </>
  ),
  annotate: (
    <>
      <path d="M1 9.500 2 7.500 8 1.500 10 3.500 3.800 9.500 1 11z" fill="#e8e8e8" />
      <path d="M1.500 12.500q4 2 6.500-1t6.500 1" fill="none" stroke="#84d0a0" strokeWidth=".9" />
    </>
  ),
  measure: (
    <>
      <path d="M6 6q6 0 6 7H6z" fill="#84d8a8" />
      <path d="M6.500 5.500q6.500.5 6.500 7" fill="none" stroke="#84d8a8" strokeWidth=".6" />
      <path d="M3 1h2.500v11.500H15V15H3z" fill="#e8e8e8" />
      <path d="M5 2v11M6 13.200h9" stroke="#444" strokeWidth="1.100" strokeDasharray=".6 .9" />
    </>
  ),
  addCube: (
    <>
      <path d="M4 5.500h8.500V14H4zM4 5.500 6.500 3H15v8.500L12.500 14M12.500 5.500 15 3" fill="none" stroke="#84d0a0" strokeWidth=".7" />
      <path d="M3 0v4.600M.7 2.300h4.600" stroke="#84e0a8" strokeWidth="1.100" />
    </>
  ),
  navGrid: (
    <path d="M4 2h8l3 12H1zM6.500 2l-1 12M9.500 2l1 12M3.300 6h9.400M2.300 10h11.400" fill="none" stroke="#eee" strokeWidth="1.300" />
  ),
  navHand: (
    <path d="M5 14.500 1.500 9q0-1.500 1.700-.5L5 10V3q.9-1.200 1.800 0V7 1.800q.9-1.200 1.800 0V7 2.500q.9-1.200 1.800 0V8 4.500q.9-1 1.700 0V11q-.5 3-2 4.500H6z" fill="#eee" />
  ),
  navZoom: (
    <>
      <path d="m6 10-4.500 4.500" stroke="#eee" strokeWidth="2.200" strokeLinecap="round" />
      <circle cx="9.500" cy="6.500" r="5.500" fill="#eee" />
      <path d="M9.500 3.800v5.400M6.800 6.500h5.400" stroke="#555" />
    </>
  ),
};

const Icon: React.FC<{ name: string; className?: string }> = ({ name, className = 'size-[18px]' }) => (
  <svg viewBox="0 0 16 16" className={`${className} shrink-0`} aria-hidden="true">
    {ICONS[name]}
  </svg>
);

const Chevron = () => (
  <svg viewBox="0 0 10 10" className="size-[10px] shrink-0 pointer-events-none" aria-hidden="true">
    <path d="m1.500 3 3.500 4 3.500-4" fill="none" stroke="#fff" strokeWidth="1.600" />
  </svg>
);

const Group: React.FC<{ children: React.ReactNode; dim?: boolean; className?: string }> = ({ children, dim, className = '' }) => (
  <div
    className={`flex h-6 shrink-0 gap-px overflow-hidden rounded-[5px] ring-1 ${
      dim ? 'bg-[#2e2e2e] ring-[#2d2d2d]' : 'bg-[#262626] ring-[#252525]'
    } ${className}`}
  >
    {children}
  </div>
);

const TONES = {
  gray: 'bg-[#575757]',
  blue: 'bg-[#394c68]',
  active: 'bg-[#5680c2]',
  dim: 'bg-[#3f3f3f] opacity-80',
};

const IconBtn: React.FC<{ icon: string; tone?: keyof typeof TONES; label?: string }> = ({ icon, tone = 'gray', label }) => (
  <button aria-label={label ?? icon} className={`flex h-6 w-6 shrink-0 items-center justify-center ${TONES[tone]}`}>
    <Icon name={icon} />
  </button>
);

const FlatBtn: React.FC<{ icon: string }> = ({ icon }) => (
  <button aria-label={icon} className="flex h-6 w-6 shrink-0 items-center justify-center">
    <Icon name={icon} />
  </button>
);

const DropBtn: React.FC<{ icon?: string }> = ({ icon }) => (
  <button
    aria-label={icon ?? 'More'}
    className={`flex h-6 shrink-0 items-center justify-center gap-1 bg-[#394c68] ${icon ? 'w-[39px]' : 'w-6'}`}
  >
    {icon && <Icon name={icon} />}
    <Chevron />
  </button>
);

const Caret = () => (
  <Group>
    <DropBtn />
  </Group>
);

const IconGroup: React.FC<{ icons: string[]; dim?: boolean }> = ({ icons, dim }) => (
  <Group dim={dim}>
    {icons.map((icon) => (
      <IconBtn key={icon} icon={icon} tone={dim ? 'dim' : 'gray'} />
    ))}
  </Group>
);

const Dropdown: React.FC<{ icon?: string; label: string; value: string; className: string }> = ({ icon, label, value, className }) => (
  <div className={`relative flex h-6 shrink-0 items-center rounded-[5px] bg-[#394c68] ring-1 ring-[#252525] ${className}`}>
    {icon && (
      <span className="pointer-events-none absolute left-[6px]">
        <Icon name={icon} />
      </span>
    )}
    <select aria-label={label} className={`h-full w-full appearance-none rounded-[5px] bg-transparent text-white outline-none ${icon ? 'pl-8' : 'pl-[10px]'}`}>
      <option>{value}</option>
    </select>
    <span className="pointer-events-none absolute right-[3px]">
      <Chevron />
    </span>
  </div>
);

const OptionsBtn = () => (
  <button className="flex h-6 w-20 shrink-0 items-center justify-between rounded-[5px] bg-[#394c68] pr-1 pl-[9px] text-white ring-1 ring-[#252525]">
    Options
    <Chevron />
  </button>
);

const MenuItems: React.FC<{ items: string[] }> = ({ items }) => (
  <>
    {items.map((item) => (
      <button key={item} className="px-[9px] text-[#cbcbcb]">
        {item}
      </button>
    ))}
  </>
);

const HistoryTools = () => (
  <div className="ml-auto flex items-center gap-[7px]">
    <Caret />
    <IconGroup icons={['undo', 'redo']} dim />
    <Group>
      <IconBtn icon="history" />
    </Group>
    <IconGroup icons={['repeat', 'repeatHist']} dim />
    <button className="flex h-6 w-[70px] items-center gap-[9px] rounded-[5px] bg-[#3d3d3d] pl-[5px] text-[#848484] ring-1 ring-[#2d2d2d]">
      <Icon name="gear" /> Last
    </button>
    <IconGroup icons={['searchList', 'search']} />
  </div>
);

const WORKSPACES = [
  'Main', 'UV Editing', 'Modeling', 'Nodes', 'Animation', 'Texture Paint', 'Shading', 'Rendering', 'Sculpting',
  'Compositing', 'Scripting', '2D Animation', '2D Full Canvas', 'Masking', 'Motion Tracking', 'Video Editing',
  'Assets', '3D Sequencer',
];

const TitleBar = () => (
  <div className="flex h-[29px] shrink-0 items-center bg-white font-['Open_Sans',sans-serif] text-[14px] text-black">
    <svg viewBox="0 0 20 20" className="ml-[3px] size-5" aria-hidden="true">
      <path d="M12 1q4 2 3 6-4 3-5 0 1-4 2-6z" fill="#2d6da8" />
      <path d="M1 11q2-4 7-2 3 4-1 6-5 0-6-4z" fill="#2a5c90" />
      <path d="M9 15q3-4 7-2 4 4 0 5-5 1-7-3z" fill="#17466f" />
      <path d="M12 3q-5 4-4 10l6 3q2-7-2-13z" fill="#2f6ca4" />
      <circle cx="9.500" cy="11" r="2.500" fill="#8cc0ea" />
      <circle cx="12" cy="6" r="1.500" fill="#b8dcf8" />
    </svg>
    <span className="ml-[6px]">(Unsaved) - Bforartists 4.5.0</span>
    <div className="ml-auto flex">
      <button aria-label="Minimize" className="flex w-[58px] justify-center">
        <svg viewBox="0 0 12 12" className="size-3"><path d="M0 6.500h12" stroke="#000" /></svg>
      </button>
      <button aria-label="Restore" className="flex w-[58px] justify-center">
        <svg viewBox="0 0 12 12" className="size-3"><path d="M.5 2.500h9v9h-9zM2.500 2.500v-2h9v9h-2" fill="none" stroke="#000" /></svg>
      </button>
      <button aria-label="Close" className="flex w-[62px] justify-center">
        <svg viewBox="0 0 12 12" className="size-3"><path d="m.5.5 11 11M11.500.5l-11 11" stroke="#000" /></svg>
      </button>
    </div>
  </div>
);

const MenuBar = () => (
  <div className="flex h-8 shrink-0 items-center bg-[#232323] pl-[11px]">
    <MenuItems items={['File', 'Edit', 'Render', 'Window', 'Help']} />
    <span className="mr-[9px] ml-2 h-[26px] w-px bg-[#303030]" />
    <nav className="flex gap-px">
      {WORKSPACES.map((w) => (
        <button
          key={w}
          className={`h-[26px] rounded-[5px] border border-black px-[10px] whitespace-nowrap ${
            w === 'Animation' ? 'bg-[#4f6c9c] text-white' : 'bg-[#2e2e2e] text-[#989898]'
          }`}
        >
          {w}
        </button>
      ))}
      <button aria-label="Add workspace" className="flex h-[26px] w-6 items-center justify-center rounded-[5px] border border-black bg-[#2e2e2e]">
        <Icon name="plus" className="size-4" />
      </button>
    </nav>
  </div>
);

const Toolbar = () => (
  <div className="flex h-9 shrink-0 items-center gap-[7px] bg-[#333] pt-[2px] pr-[10px] pl-3">
    <Caret />
    <Caret />
    <div className="flex">
      <Group><IconBtn icon="fileNew" /></Group>
      <FlatBtn icon="file" />
    </div>
    <div className="flex">
      <Group><IconBtn icon="folder" /></Group>
      <FlatBtn icon="folderClock" />
    </div>
    <IconGroup icons={['save', 'saveDown', 'saveCopy']} />
    <FlatBtn icon="importIn" />
    <FlatBtn icon="exportOut" />
    <IconGroup icons={['photo', 'clapper']} />
    <Caret />
    <Caret />
    <IconGroup icons={['plane', 'cube', 'circle', 'uvsphere', 'ico', 'cylinder', 'cone', 'torus', 'grid']} />
    <IconGroup icons={['empty', 'curve', 'monkey']} />
    <IconGroup icons={['fontObj', 'armature', 'lattice', 'movieCam', 'speaker']} />
    <Caret />
    <Caret />
    <HistoryTools />
  </div>
);

const ViewHeader: React.FC<{ full?: boolean }> = ({ full }) => (
  <div className="relative flex h-[33px] shrink-0 items-center gap-[7px] overflow-hidden bg-[#3a3a3a] pb-px pl-[18px]">
    <Dropdown icon="cubeOrange" label="Mode" value="Object Mode" className="w-[136px]" />
    <nav className="flex w-[375px] shrink-0">
      <MenuItems items={['Quick', 'View', 'Navigation', 'Select', 'Add', 'Object']} />
    </nav>
    <Dropdown icon="orient" label="Orientation" value="Global" className="w-24" />
    <Group><DropBtn icon="pivot" /></Group>
    <Group>
      <IconBtn icon="magnetOff" />
      <DropBtn icon="snapInc" />
    </Group>
    <Group><IconBtn icon="propOff" /></Group>
    <Group className="ml-[13px]"><DropBtn icon="cursorEye" /></Group>
    <Group>
      <IconBtn icon="gizmo" tone={full ? 'active' : 'gray'} />
      <DropBtn />
    </Group>
    {full && (
      <>
        <Group>
          <IconBtn icon="xray" tone="active" />
          <DropBtn />
        </Group>
        <Group><IconBtn icon="retopo" /></Group>
        <Group className="ml-[5px]">
          <IconBtn icon="wire" />
          <IconBtn icon="solid" tone="active" />
          <IconBtn icon="material" />
          <IconBtn icon="rendered" />
          <DropBtn />
        </Group>
        <IconGroup icons={['home1', 'home2', 'home3', 'home4']} />
      </>
    )}
  </div>
);

const RegionTab = () => (
  <span className="absolute right-[26px] bottom-0 flex h-[10px] w-[22px] items-center justify-center rounded-t bg-[#2b2b2b]/70">
    <svg viewBox="0 0 10 8" className="h-2 w-[10px]"><path d="m1 7 4-5 4 5" fill="none" stroke="#aaa" strokeWidth="1.500" /></svg>
  </span>
);

const CameraView = () => (
  <section className="relative flex min-w-0 flex-col overflow-hidden rounded-lg bg-linear-to-b from-[#4b4b4b] to-[#2e2e2e]">
    <ViewHeader />
    <div className="flex h-[31px] shrink-0 justify-between">
      <div className="flex w-[58px] items-center rounded-br-md bg-[#3a3a3a] pl-5">
        <Icon name="selectMove" className="size-[22px]" />
      </div>
      <div className="flex w-[101px] items-center rounded-bl-md bg-[#3a3a3a] pl-[11px]">
        <OptionsBtn />
      </div>
    </div>
    <div className="flex flex-1 items-center justify-center pb-[62px]">
      <div className="aspect-[532/301] w-[61%] border border-[#6a6a6a] bg-linear-to-b from-[#585858] to-[#4c4c4c]" />
    </div>
    <span className="absolute top-[91px] left-0 flex h-6 w-[10px] items-center justify-center rounded-r bg-[#3a3a3a] text-[#aaa]">›</span>
    <span className="absolute top-[91px] right-0 flex h-6 w-[11px] items-center justify-center rounded-l bg-[#3a3a3a] text-[#aaa]">‹</span>
    <RegionTab />
  </section>
);

// ground plane camera: orbit centre sits on the world origin
const FOCAL = 812;
const DIST = 14.35;
const SA = 0.9073;
const CA = 0.4206;
const SE = 0.4542;
const CE = 0.8909;
const FLOOR_W = 1230;
const FLOOR_H = 840;

type Pt = [number, number];
type Line = [Pt, Pt];

const project = (x: number, y: number): Pt => {
  const w = x * SA - y * CA;
  const depth = DIST - CE * w;
  return [FLOOR_W / 2 + (FOCAL * (x * CA + y * SA)) / depth, 421 + (FOCAL * SE * w) / depth];
};

const NEAR = 1.5;
const FAR = 1200;
const lineAlongX = (y: number): Line => [project(-FAR, y), project((DIST - NEAR) / (CE * SA) + (y * CA) / SA, y)];
const lineAlongY = (x: number): Line => [project(x, FAR), project(x, (x * SA - (DIST - NEAR) / CE) / CA)];

// Liang-Barsky against the floor rectangle
const clip = ([a, b]: Line): Line | null => {
  const dx = b[0] - a[0];
  const dy = b[1] - a[1];
  const p = [-dx, dx, -dy, dy];
  const q = [a[0] + 10, FLOOR_W + 10 - a[0], a[1] - 30, FLOOR_H + 10 - a[1]];
  let t0 = 0;
  let t1 = 1;
  for (let i = 0; i < 4; i++) {
    if (p[i] === 0) {
      if (q[i] < 0) return null;
      continue;
    }
    const r = q[i] / p[i];
    if (p[i] < 0) t0 = Math.max(t0, r);
    else t1 = Math.min(t1, r);
  }
  if (t0 >= t1) return null;
  return [
    [a[0] + t0 * dx, a[1] + t0 * dy],
    [a[0] + t1 * dx, a[1] + t1 * dy],
  ];
};

const toPath = (lines: Line[]) =>
  lines
    .map(clip)
    .filter((l): l is Line => l !== null)
    .map(([a, b]) => `M${a[0].toFixed(1)} ${a[1].toFixed(1)}L${b[0].toFixed(1)} ${b[1].toFixed(1)}`)
    .join('');

const range = (from: number, to: number, step = 1) => {
  const out: number[] = [];
  for (let i = from; i <= to; i += step) out.push(i);
  return out;
};

const minor = range(-90, 120).filter((n) => n % 10 !== 0);
const major = range(-260, 300, 10).filter((n) => n !== 0);
const MINOR_PATH = toPath([...minor.map(lineAlongX), ...minor.filter((n) => n < 60).map(lineAlongY)]);
const MAJOR_PATH = toPath([...major.map(lineAlongX), ...major.filter((n) => n < 200).map(lineAlongY)]);
const X_AXIS = toPath([lineAlongX(0)]);
const Y_AXIS = toPath([lineAlongY(0)]);

const Floor = () => (
  <svg viewBox="0 0 1230 840" preserveAspectRatio="xMidYMid slice" className="absolute inset-0 h-full w-full" aria-hidden="true">
    <defs>
      <linearGradient id="minor" gradientUnits="userSpaceOnUse" x1="0" y1="0" x2="0" y2="840">
        <stop offset=".1" stopColor="#9a9a9a" stopOpacity="0" />
        <stop offset=".2" stopColor="#9a9a9a" stopOpacity=".3" />
        <stop offset=".4" stopColor="#9a9a9a" stopOpacity=".65" />
        <stop offset="1" stopColor="#a0a0a0" stopOpacity=".75" />
      </linearGradient>
      <linearGradient id="major" gradientUnits="userSpaceOnUse" x1="0" y1="0" x2="0" y2="840">
        <stop offset=".03" stopColor="#a0a0a0" stopOpacity=".1" />
        <stop offset=".12" stopColor="#a0a0a0" stopOpacity=".35" />
        <stop offset=".3" stopColor="#a4a4a4" stopOpacity=".8" />
        <stop offset="1" stopColor="#a4a4a4" stopOpacity=".8" />
      </linearGradient>
      <linearGradient id="red" gradientUnits="userSpaceOnUse" x1="0" y1="0" x2="0" y2="840">
        <stop offset=".02" stopColor="#c05060" stopOpacity=".3" />
        <stop offset=".35" stopColor="#bc5060" stopOpacity=".9" />
        <stop offset="1" stopColor="#c45264" />
      </linearGradient>
    </defs>
    <path d={MINOR_PATH} stroke="url(#minor)" strokeWidth="1.300" />
    <path d={MAJOR_PATH} stroke="url(#major)" strokeWidth="1.300" />
    <path d={X_AXIS} stroke="url(#red)" strokeWidth="1.900" />
    <path d={Y_AXIS} stroke="#3fae3f" strokeWidth="1.900" />
    <g fill="none" strokeWidth="1.500">
      <circle cx="615" cy="421" r="12" stroke="#fff" />
      <circle cx="615" cy="421" r="12" stroke="#f02020" strokeDasharray="4.700 4.700" />
      <path d="M615 399v16M615 427v16M593 426l16-4M621 420l16-4M605 412l6 6M619 425l6 6" stroke="#eee" strokeWidth="1.200" />
    </g>
  </svg>
);

const TOOL_GROUPS = [
  [['selectMove', 'cursor3d']],
  [['move', 'rotate'], ['scale', 'transform']],
  [['annotate', 'measure']],
  [['addCube']],
];
const HAS_CORNER = ['selectMove', 'scale', 'annotate', 'addCube'];

const Grip = () => (
  <svg viewBox="0 0 14 8" className="h-2 w-[14px] shrink-0" aria-hidden="true">
    <path d="M0 1.500h14M0 6.500h14" stroke="#8c8c8c" strokeDasharray="2 2" />
    <path d="M0 4h14" stroke="#1c1c1c" strokeDasharray="2 2" />
  </svg>
);

const Triangle: React.FC<{ open?: boolean; color?: string }> = ({ open, color = '#d8d8d8' }) => (
  <svg viewBox="0 0 12 12" className="size-3 shrink-0" aria-hidden="true">
    <path d={open ? 'M1 .5h10L6 11.500z' : 'M1 1v10l10-5z'} fill={color} />
  </svg>
);

const AxisGizmo = () => (
  <svg viewBox="0 0 100 100" className="absolute top-[41px] right-3 size-[100px]" role="img" aria-label="View axes">
    <circle cx="33.500" cy="35" r="9" fill="#d04858" fillOpacity=".15" stroke="#b84c5a" strokeWidth="1.200" />
    <circle cx="50.500" cy="86.500" r="9" fill="#2070b8" fillOpacity=".35" stroke="#2a70b0" strokeWidth="1.200" />
    <circle cx="13.500" cy="58.500" r="10" fill="#40a040" fillOpacity=".65" stroke="#20e020" strokeWidth="1.400" />
    <path d="M50 50V20" stroke="#2a74c0" strokeWidth="2" />
    <path d="m50 50 30-6" stroke="#28d028" strokeWidth="2" />
    <path d="m50 50 10 10" stroke="#f03850" strokeWidth="2" />
    <circle cx="49.500" cy="15" r="10.500" fill="#1a7ad0" />
    <circle cx="86.500" cy="43" r="10" fill="#26c826" />
    <circle cx="66.500" cy="67" r="11" fill="#ff3654" />
    <g fontFamily="Inter, sans-serif" fontWeight="600" fontSize="12" textAnchor="middle" fill="#111">
      <text x="49.500" y="19.500">Z</text>
      <text x="86.500" y="47.500">Y</text>
      <text x="66.500" y="71.500">X</text>
    </g>
  </svg>
);

const SIDE_TABS = [
  { label: 'Tools', size: 'h-[55px]' },
  { label: 'Object', size: 'h-[62px]' },
  { label: 'Utility', size: 'h-[57px]' },
];

const Viewport = () => (
  <section className="relative flex min-h-0 flex-1 flex-col overflow-hidden rounded-lg bg-linear-to-b from-[#666] via-[#535353] to-[#3e3e3e]">
    <Floor />
    <ViewHeader full />
    <div className="relative flex flex-1 items-stretch">
      <div className="mt-8 flex w-6 flex-col items-center gap-[6px] bg-[#323232]/60 pt-[5px]">
        {SIDE_TABS.map((t, i) => (
          <button
            key={t.label}
            className={`flex w-[22px] items-center justify-center rounded-[5px] border border-black ${t.size} ${
              i === 0 ? 'bg-[#4f6c9c] text-white' : 'bg-[#303030] text-[#989898]'
            }`}
          >
            <span className="rotate-180 [writing-mode:vertical-rl]">{t.label}</span>
          </button>
        ))}
      </div>
      <div className="mt-8 ml-[5px] w-[120px]">
        <div className="flex h-[31px] items-center gap-[6px] rounded-t-md bg-[#363636] pr-3 pl-[10px] text-[#e6e6e6]">
          <Triangle open color="#a8d880" />
          <span className="mr-auto">Tools</span>
          <Grip />
        </div>
        <div className="flex flex-col items-start gap-[7px] pt-[11px] pl-[11px]">
          {TOOL_GROUPS.map((rows, i) => (
            <div key={i} className="flex flex-col gap-px overflow-hidden rounded-[5px] bg-[#3a3a3a] ring-1 ring-[#3a3a3a]">
              {rows.map((row) => (
                <div key={row[0]} className="flex gap-px">
                  {row.map((tool) => (
                    <button
                      key={tool}
                      aria-label={tool}
                      className={`relative flex h-[42px] w-[48px] items-center justify-center ${tool === 'selectMove' ? 'bg-[#5680c2]' : 'bg-[#555]'}`}
                    >
                      <Icon name={tool} className={tool === 'selectMove' ? 'size-[26px]' : 'size-[30px]'} />
                      {HAS_CORNER.includes(tool) && (
                        <svg viewBox="0 0 5 5" className="absolute right-[3px] bottom-[3px] size-[5px]"><path d="M5 0v5H0z" fill="#fff" /></svg>
                      )}
                    </button>
                  ))}
                </div>
              ))}
            </div>
          ))}
        </div>
      </div>
      <div className="mt-10 ml-4 leading-[22px] text-white [text-shadow:0_0_3px_#000]">
        <p>User Perspective</p>
        <p>(1) Scene Collection</p>
      </div>
      <div className="absolute top-0 right-0 flex h-[31px] w-[101px] items-center rounded-bl-md bg-[#3a3a3a] pl-[11px]">
        <OptionsBtn />
      </div>
      <div className="absolute top-[42px] right-[113px] flex gap-[3px]">
        {['navGrid', 'movieCamGray', 'navHand', 'navZoom'].map((n) => (
          <button key={n} aria-label={n} className="flex size-[34px] items-center justify-center rounded-full bg-[#3c3c3c]/85">
            <Icon name={n} className="size-5" />
          </button>
        ))}
      </div>
      <AxisGizmo />
      <span className="absolute top-[58px] right-0 flex h-[23px] w-[11px] items-center justify-center rounded-l bg-[#444] text-[#aaa]">‹</span>
    </div>
    <RegionTab />
  </section>
);

const RULER_START = -9;
const RULER_SPAN = 269;
const frameLeft = (frame: number) => `${((frame - RULER_START) / RULER_SPAN) * 100}%`;
const TICKS = range(10, 250, 10);

const DopeSheet = () => (
  <section className="relative flex h-[343px] shrink-0 flex-col overflow-hidden rounded-lg bg-[#3f3f3f]">
    <div className="flex h-8 shrink-0 items-center gap-[7px] bg-[#303030] px-[9px]">
      <Group>
        <IconBtn icon="dope" tone="active" />
        <IconBtn icon="graph" />
        <IconBtn icon="driver" />
        <IconBtn icon="nla" />
      </Group>
      <Dropdown icon="dope" label="Editor mode" value="Dope Sheet" className="w-[158px]" />
      <nav className="flex">
        <MenuItems items={['Quick', 'View', 'Select', 'Marker', 'Channel', 'Key']} />
      </nav>
      <div className="ml-auto flex items-center gap-[7px]">
        <Group><IconBtn icon="cursorBox" tone="active" /></Group>
        <Group>
          <IconBtn icon="arrow" tone="active" />
          <IconBtn icon="hidden" />
          <IconBtn icon="warning" />
        </Group>
        <Group><DropBtn icon="funnel" /></Group>
        <Group><IconBtn icon="magnetOff" /><DropBtn /></Group>
        <Group><IconBtn icon="magnetGreen" /><DropBtn /></Group>
        <Group><IconBtn icon="propOff" /></Group>
        <Group>
          <DropBtn icon="interp" />
          <DropBtn icon="keyAxes" />
          <DropBtn icon="handles" />
          <DropBtn icon="keyframe" />
        </Group>
        <OptionsBtn />
      </div>
    </div>
    <div className="flex min-h-0 flex-1">
      <div className="w-[249px] shrink-0">
        <div className="mt-[4px] ml-[2px] flex h-[22px] w-[243px] items-center gap-px overflow-hidden rounded-[5px] bg-[#262626] ring-1 ring-[#252525]">
          <label className="flex h-full flex-1 items-center gap-[10px] bg-[#545454] pl-1">
            <Icon name="search" />
            <input placeholder="Search" aria-label="Search channels" className="w-full bg-transparent outline-none placeholder:text-[#808080]" />
          </label>
          <button aria-label="Invert" className="flex h-full w-[27px] items-center justify-center bg-[#545454]">
            <Icon name="swap" />
          </button>
        </div>
        <button className="mt-[5px] flex h-[22px] w-full items-center gap-[6px] rounded-l-md bg-[#cb701b] pb-px pl-[2px] text-black">
          <svg viewBox="0 0 14 10" className="h-[10px] w-[14px]"><path d="M1 1h12L7 9z" fill="#eee" stroke="#222" /></svg>
          Summary
        </button>
      </div>
      <div className="relative min-w-0 flex-1 overflow-hidden bg-[#3f4141]">
        <div className="absolute inset-y-0 left-0 bg-[#313333]" style={{ width: frameLeft(0.5) }} />
        <div className="absolute inset-y-0 right-0 bg-[#313333]" style={{ left: frameLeft(250) }} />
        <div className="absolute inset-x-0 top-[31px] h-5 bg-[#f08020]/35" />
        <div className="absolute inset-x-0 top-0 h-[29px] bg-[#2a2a2a]" />
        {TICKS.map((f) => (
          <React.Fragment key={f}>
            <div className="absolute top-[29px] bottom-0 w-px bg-[#101010]" style={{ left: frameLeft(f) }} />
            <span className="absolute top-[5px] -translate-x-1/2 text-[#e8e8e8]" style={{ left: frameLeft(f) }}>{f}</span>
          </React.Fragment>
        ))}
        <div className="absolute right-[13px] bottom-[2px] left-4 h-[5px] rounded-full bg-[#5c5c5c]/80" />
        <div className="absolute top-[25px] bottom-0 w-[2px] -translate-x-1/2 bg-[#66d444]" style={{ left: frameLeft(1) }} />
        <span
          className="absolute top-[4px] flex h-[21px] w-[30px] -translate-x-1/2 items-center justify-center rounded-[5px] bg-[#66d444] text-white"
          style={{ left: frameLeft(1) }}
        >
          1
        </span>
      </div>
      <div className="w-[274px] shrink-0 pt-[2px] pl-[267px]">
        <div className="h-[270px] w-[5px] rounded-full bg-[#545454]" />
      </div>
    </div>
    <RegionTab />
  </section>
);

const Timeline = () => (
  <section className="relative flex h-8 shrink-0 items-center overflow-hidden rounded-lg bg-[#303030] px-[10px]">
    <div className="flex w-[29.4%] shrink-0 items-center gap-[7px]">
      <Group><DropBtn icon="clock" /></Group>
      <FlatBtn icon="menu" />
    </div>
    <div className="flex items-center">
      <IconGroup icons={['first', 'prev', 'playBack', 'play', 'next', 'last', 'loop']} />
      <input
        aria-label="Current frame"
        defaultValue="1"
        className="mr-2 ml-5 h-6 w-[91px] rounded-[5px] bg-[#3d3d3d] text-center text-[#ccc] ring-1 ring-[#252525] outline-none"
      />
      <Group>
        <IconBtn icon="clockRange" />
        <IconBtn icon="marker" />
        <label className="flex w-[112px] items-center bg-[#3f3f3f] px-[18px] text-[#ccc]">
          Start
          <input defaultValue="1" className="w-full min-w-0 bg-transparent text-right outline-none" />
        </label>
        <label className="flex w-[104px] items-center bg-[#3f3f3f] px-[18px] text-[#ccc]">
          End
          <input defaultValue="250" className="w-full min-w-0 bg-transparent text-right outline-none" />
        </label>
        <IconBtn icon="marker" />
      </Group>
      <div className="ml-[9px]">
        <IconGroup icons={['keyAdd', 'keyDel']} />
      </div>
    </div>
    <div className="flex flex-1 justify-end">
      <Group>
        <IconBtn icon="record" />
        <label className="flex w-[171px] items-center gap-[10px] bg-[#575757] pl-1">
          <Icon name="keys" />
          <input aria-label="Keying set" placeholder="Keying Set" className="w-full min-w-0 bg-transparent outline-none placeholder:text-[#848484]" />
        </label>
        <button className="flex w-[93px] items-center justify-between bg-[#394c68] pr-1 pl-[9px] text-white">Playback <Chevron /></button>
        <button className="flex w-[74px] items-center justify-between bg-[#394c68] pr-[3px] pl-[9px] text-white">Keying <Chevron /></button>
        <DropBtn />
      </Group>
    </div>
    <RegionTab />
  </section>
);

const Outliner = () => (
  <section className="flex h-[306px] shrink-0 flex-col overflow-hidden rounded-lg bg-[#3d3d3d]">
    <div className="flex h-[33px] shrink-0 items-center gap-2 bg-[#303030] pr-2 pb-[2px] pl-[10px]">
      <Group><IconBtn icon="toggles" /></Group>
      <Group><DropBtn icon="image" /></Group>
      <nav className="-mr-[6px] flex w-[95px]">
        <MenuItems items={['View', 'Col']} />
      </nav>
      <Group><IconBtn icon="boxAdd" /></Group>
      <div className="ml-auto flex gap-2">
        <Group><IconBtn icon="search" /></Group>
        <Group><DropBtn icon="funnel" /></Group>
      </div>
    </div>
    <ul className="[&>li]:flex [&>li]:h-[25px] [&>li]:items-center [&>li]:pr-[16px] [&>li:nth-child(odd)]:bg-[#424242]">
      <li className="pl-[26px] text-white">
        <span className="mr-[5px] flex size-[24px] items-center justify-center rounded-[5px] bg-[#6e6e6e]"><Icon name="box" className="size-4" /></span>
        Scene Collection
      </li>
      <li className="pl-[31px] text-[#c8c8c8]">
        <Triangle open color="#b8f088" />
        <span className="mr-[9px] ml-[11px] flex"><Icon name="box" /></span>
        Collection
        <span className="ml-auto flex items-center gap-[7px]">
          <input type="checkbox" aria-label="Exclude from view layer" defaultChecked className="peer sr-only" />
          <svg viewBox="0 0 16 16" className="size-4"><rect width="16" height="16" rx="2" fill="#fff" /><path d="m3.500 8 3 4 6-9" fill="none" stroke="#222" strokeWidth="1.800" /></svg>
          <Icon name="eye" />
          <Icon name="render" />
        </span>
      </li>
      <li className="pl-[56px] text-[#868686]">
        <Triangle color="#a0a0a0" />
        <span className="mr-[9px] ml-[9px] flex opacity-70"><Icon name="movieCam" /></span>
        Camera
        <span className="ml-6 flex size-[24px] items-center justify-center rounded-[5px] bg-[#6a6a6a]"><Icon name="movieCamGray" /></span>
        <span className="ml-auto flex gap-[7px]"><Icon name="eyeOff" /><Icon name="render" /></span>
      </li>
      <li className="pl-[56px] text-[#868686]">
        <Triangle color="#a0a0a0" />
        <span className="mr-[9px] ml-[9px] flex"><Icon name="bulb" /></span>
        Light
        <span className="ml-[28px] flex"><Icon name="lightData" /></span>
        <span className="ml-auto flex gap-[7px]"><Icon name="eyeOff" /><Icon name="render" /></span>
      </li>
      {range(1, 7).map((n) => (
        <li key={n} />
      ))}
    </ul>
  </section>
);

const PROP_TABS = ['render', 'printer', 'image', 'scene', 'world'];
const SUB_PANELS = ['Units', 'Gravity', 'Simulation', 'Keying Sets', 'Audio', 'Rigid Body World', 'Light Probes', 'Animation', 'Custom Properties'];
const FIELDS = [
  { id: 'camera', label: 'Camera', icon: 'cubeOrange', value: 'Camera' },
  { id: 'bg-scene', label: 'Background Scene', icon: 'scene', placeholder: 'Scene' },
  { id: 'clip', label: 'Active Clip', icon: 'clip', placeholder: 'Movie Clip' },
];

const Properties = () => (
  <section className="flex min-h-0 flex-1 flex-col overflow-hidden rounded-lg bg-[#303030]">
    <div className="flex h-8 shrink-0 items-center justify-between pr-[10px] pb-px pl-[10px]">
      <Group><IconBtn icon="tree" /></Group>
      <label className="flex h-6 w-[146px] items-center gap-2 rounded-[5px] bg-[#545454] pl-1 ring-1 ring-[#252525]">
        <Icon name="search" className="size-5" />
        <input placeholder="Search" aria-label="Search properties" className="w-full min-w-0 bg-transparent outline-none placeholder:text-[#808080]" />
      </label>
      <Caret />
    </div>
    <div className="flex flex-1">
      <div className="flex w-[34px] shrink-0 flex-col gap-px pt-[10px]">
        {PROP_TABS.map((t) => (
          <button
            key={t}
            aria-label={t}
            className={`flex h-[34px] items-center justify-center rounded-l-md border border-r-0 border-black ${t === 'scene' ? 'bg-[#4f6c9c]' : 'bg-[#2e2e2e]'}`}
          >
            <Icon name={t} />
          </button>
        ))}
      </div>
      <div className="flex-1 bg-[#3f3f3f] px-[5px] text-[#dcdcdc]">
        <div className="mt-[10px] flex h-6 items-center pr-2 pl-[8px]">
          <Icon name="scene" />
          <span className="mr-auto ml-[13px]">Scene</span>
          <Icon name="pin" />
        </div>
        <div className="mt-[21px] flex h-6 items-center justify-between pr-[5px] pl-[5px]">
          <span>Render Engine</span>
          <Dropdown label="Render Engine" value="EEVEE" className="w-[223px]" />
        </div>
        <div className="mt-3 overflow-hidden rounded-md bg-[#4b4b4b]">
          <div className="flex h-[31px] items-center gap-[6px] bg-[#353535] pr-3 pl-[10px]">
            <Triangle open color="#a8d880" />
            <span className="mr-auto">Scene</span>
            <Grip />
          </div>
          <div className="flex flex-col gap-[7px] px-[10px] py-[11px]">
            <Group className="text-[#c8c8c8]">
              <DropBtn icon="scene" />
              <label className="flex flex-1 items-center bg-[#565656] pr-1 pl-[9px]">
                <input aria-label="Scene name" defaultValue="Scene" className="w-full min-w-0 bg-transparent outline-none" />
                <Icon name="pin" />
              </label>
              <IconBtn icon="plus" />
              <IconBtn icon="closeDim" tone="dim" />
            </Group>
            {FIELDS.map((f) => (
              <div key={f.id} className="flex items-center justify-between">
                <label htmlFor={f.id}>{f.label}</label>
                <div className="flex h-6 w-[217px] items-center gap-[9px] rounded-[5px] bg-[#565656] pr-1 pl-[6px] ring-1 ring-[#252525]">
                  <Icon name={f.icon} />
                  <input id={f.id} defaultValue={f.value} placeholder={f.placeholder} className="w-full min-w-0 bg-transparent text-[#c8c8c8] outline-none placeholder:text-[#7c7c7c]" />
                  {f.value && <Icon name="close" className="size-4" />}
                </div>
              </div>
            ))}
          </div>
        </div>
        {SUB_PANELS.map((p) => (
          <div key={p} className="mt-[2px] flex h-[31px] items-center gap-[5px] rounded-md bg-[#353535] pr-3 pl-[10px]">
            <Triangle />
            {p === 'Gravity' ? (
              <label className="mr-auto flex items-center gap-[3px]">
                <input type="checkbox" defaultChecked className="peer sr-only" />
                <svg viewBox="0 0 16 16" className="size-[17px]"><rect width="16" height="16" rx="2" fill="#7be0fc" /><path d="m3.500 8 3 4 6-8" fill="none" stroke="#111" strokeWidth="1.800" /></svg>
                {p}
              </label>
            ) : (
              <span className="mr-auto">{p}</span>
            )}
            <Grip />
          </div>
        ))}
      </div>
    </div>
  </section>
);

export default function App() {
  return (
    <div className="flex h-screen flex-col bg-[#181818] font-['Inter',sans-serif] text-[14px] leading-5 select-none">
      <TitleBar />
      <MenuBar />
      <Toolbar />
      <main className="flex min-h-0 flex-1 gap-[6px] pt-px pr-[3px] pb-[2px] pl-1">
        <div className="flex min-w-0 flex-1 flex-col">
          <div className="mb-[5px] grid min-h-0 flex-1 grid-cols-[874fr_1230fr] gap-[6px]">
            <CameraView />
            <div className="flex min-w-0 flex-col gap-[3px]">
              <div className="flex h-9 shrink-0 items-center gap-[7px] rounded-lg border-b-[3px] border-[#5c5c5c] bg-[#333] px-[10px]">
                <Caret />
                <Caret />
                <Caret />
                <Caret />
                <HistoryTools />
              </div>
              <Viewport />
            </div>
          </div>
          <DopeSheet />
          <div className="h-1 shrink-0" />
          <Timeline />
        </div>
        <div className="flex w-[438px] shrink-0 flex-col gap-1">
          <Outliner />
          <Properties />
        </div>
      </main>
      <footer className="flex h-[27px] shrink-0 items-center justify-end gap-2 bg-[#303030] pr-4 pb-[2px] text-[#a8a8a8]">
        <Icon name="offline" />
        <span className="ml-[3px] h-[17px] w-px bg-[#888]" />
        4.5.0
      </footer>
    </div>
  );
}
